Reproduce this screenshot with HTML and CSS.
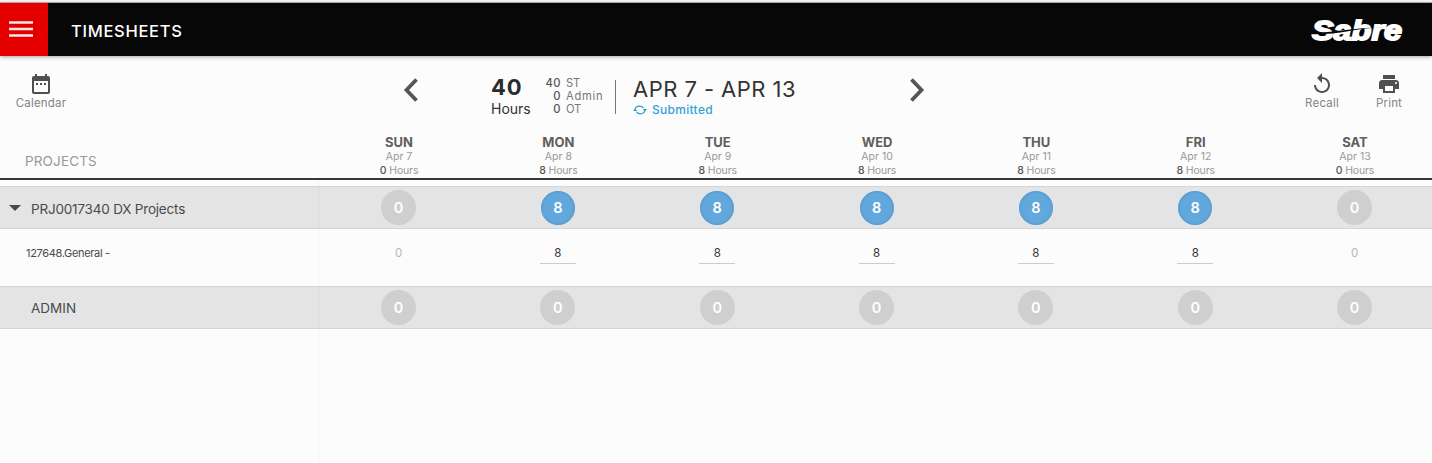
FILE: index.html
```html
<!DOCTYPE html>
<html lang="en">
<head>
<meta charset="utf-8">
<title>Timesheets</title>
<link rel="stylesheet" href="styles.css">
</head>
<body>
<header class="topbar">
  <button class="menu" aria-label="Menu"><svg width="24" height="16" viewBox="0 0 24 16"><path d="M0 1.5h24M0 8h24M0 14.5h24" stroke="#f4e8e8" stroke-width="2.700"/></svg></button>
  <h1 class="title">TIMESHEETS</h1>
  <svg class="logo" width="98" height="36" viewBox="0 0 98 36">
    <text class="logo-text" x="3" y="28" textLength="90" lengthAdjust="spacingAndGlyphs">Sabre</text>
    <path d="M1 22.300Q22 22.800 39 19.300T76 15.500Q57 15.300 39 17.800T1 21z" fill="#070707"/>
  </svg>
</header>
<section class="toolbar">
  <div class="tool calendar">
    <svg width="24" height="24" viewBox="0 0 24 24"><path fill="#505050" d="M9 11H7v2h2zm4 0h-2v2h2zm4 0h-2v2h2zm2-7h-1V2h-2v2H8V2H6v2H5c-1.100 0-2 .9-2 2v14c0 1.100.9 2 2 2h14c1.100 0 2-.9 2-2V6c0-1.100-.9-2-2-2zm0 16H5V9h14z"/></svg>
    <span class="label">Calendar</span>
  </div>
  <svg class="prev" width="16" height="24" viewBox="0 0 16 24"><path d="M13.500 1.500L3.500 12l10 10.500" fill="none" stroke="#555" stroke-width="3.800"/></svg>
  <div class="total"><b class="total-num">40</b><span class="total-label">Hours</span></div>
  <div class="split">
    <b>40</b><span class="st">ST</span>
    <b>0</b><span class="adm">Admin</span>
    <b>0</b><span class="ot">OT</span>
  </div>
  <div class="period">
    <span class="range">APR 7 - APR 13</span>
    <span class="status"><svg width="14" height="10" viewBox="0 0 14 10"><path d="M2 6V4.800Q2.500 1.300 6.500 1.200Q9 1.200 10.500 3M12 4v1.200Q11.500 8.800 7.500 8.800Q5 8.800 3.500 7" fill="none" stroke="#35a0d8" stroke-width="1.200"/><path d="M0 6h4.300L2.200 3.500zM9.700 4H14l-2.200 2.500z" fill="#35a0d8"/></svg><span class="submitted">Submitted</span></span>
  </div>
  <svg class="next" width="16" height="24" viewBox="0 0 16 24"><path d="M2.500 1.500L12.500 12l-10 10.500" fill="none" stroke="#555" stroke-width="3.800"/></svg>
  <div class="tool recall">
    <svg width="24" height="24" viewBox="0 0 24 24"><path fill="#505050" d="M12 5V1L7 6l5 5V7c3.310 0 6 2.690 6 6s-2.690 6-6 6-6-2.690-6-6H4c0 4.420 3.580 8 8 8s8-3.580 8-8-3.580-8-8-8z"/></svg>
    <span class="label">Recall</span>
  </div>
  <div class="tool print">
    <svg width="24" height="24" viewBox="0 0 24 24"><path fill="#505050" d="M19 8H5c-1.660 0-3 1.340-3 3v6h4v4h12v-4h4v-6c0-1.660-1.340-3-3-3zm-3 11H8v-5h8zm3-7c-.55 0-1-.45-1-1s.45-1 1-1 1 .45 1 1-.45 1-1 1zm-1-9H6v4h12z"/></svg>
    <span class="label">Print</span>
  </div>
</section>
<main class="sheet">
  <div class="row head">
    <div class="projects"><span>PROJECTS</span></div>
    <div class="day"><b>SUN</b><span>Apr 7</span><span><i>0</i> Hours</span></div>
    <div class="day"><b>MON</b><span>Apr 8</span><span><i>8</i> Hours</span></div>
    <div class="day"><b>TUE</b><span>Apr 9</span><span><i>8</i> Hours</span></div>
    <div class="day"><b>WED</b><span>Apr 10</span><span><i>8</i> Hours</span></div>
    <div class="day"><b>THU</b><span>Apr 11</span><span><i>8</i> Hours</span></div>
    <div class="day"><b>FRI</b><span>Apr 12</span><span><i>8</i> Hours</span></div>
    <div class="day"><b>SAT</b><span>Apr 13</span><span><i>0</i> Hours</span></div>
  </div>
  <div class="row gap"><div class="edge"></div></div>
  <div class="row group">
    <div class="edge name"><svg class="caret" width="12" height="6" viewBox="0 0 12 6"><path d="M0 0h12L6 6z" fill="#484848"/></svg><span class="prj">PRJ0017340 DX Projects</span></div>
    <div class="cell"><span class="dot">0</span></div>
    <div class="cell"><span class="dot on">8</span></div>
    <div class="cell"><span class="dot on">8</span></div>
    <div class="cell"><span class="dot on">8</span></div>
    <div class="cell"><span class="dot on">8</span></div>
    <div class="cell"><span class="dot on">8</span></div>
    <div class="cell"><span class="dot">0</span></div>
  </div>
  <div class="row task">
    <div class="edge task-name"><span>127648.General -</span></div>
    <div class="cell"><span class="val">0</span></div>
    <div class="cell"><span class="val input">8</span></div>
    <div class="cell"><span class="val input">8</span></div>
    <div class="cell"><span class="val input">8</span></div>
    <div class="cell"><span class="val input">8</span></div>
    <div class="cell"><span class="val input">8</span></div>
    <div class="cell"><span class="val">0</span></div>
  </div>
  <div class="row group admin-group">
    <div class="edge name"><span class="admin">ADMIN</span></div>
    <div class="cell"><span class="dot">0</span></div>
    <div class="cell"><span class="dot">0</span></div>
    <div class="cell"><span class="dot">0</span></div>
    <div class="cell"><span class="dot">0</span></div>
    <div class="cell"><span class="dot">0</span></div>
    <div class="cell"><span class="dot">0</span></div>
    <div class="cell"><span class="dot">0</span></div>
  </div>
  <div class="row rest"><div class="edge"></div></div>
</main>
</body>
</html>
```
FILE: styles.css
```css
* { box-sizing: border-box; }
body { margin: 0; height: 463px; overflow: hidden; display: flex; flex-direction: column; background: #fcfcfc; font-family: Inter, "Open Sans", sans-serif; color: #4a4a4a; white-space: nowrap; }
svg { display: block; flex: none; }
.topbar { flex: none; height: 54px; margin-top: 2px; border-top: 1px solid #aaa; display: flex; align-items: center; background: #070707; box-shadow: 0 1px 4px rgba(0,0,0,.35); }
.menu { width: 48px; height: 53px; border: 0; padding: 0 0 2px 9px; background: #e50000; }
.title { margin: 3px 0 0 23px; font-size: 16.500px; font-weight: 500; letter-spacing: .7px; color: #fff; }
.logo { margin: 0 25px 0 auto; overflow: visible; }
.logo-text { font: italic bold 28px "Liberation Sans", sans-serif; fill: #fff; stroke: #fff; stroke-width: 1.800px; }

.toolbar { flex: none; height: 74px; display: flex; align-items: flex-start; }
.tool { display: flex; flex-direction: column; align-items: center; padding-top: 16px; }
.tool .label { font-size: 11.500px; line-height: 14px; letter-spacing: .2px; color: #858585; }
.calendar { width: 82px; }
.prev { margin: 22px 0 0 321px; }
.total { width: 60px; margin: 19px 0 0 72px; display: flex; flex-direction: column; }
.total-num { font-size: 22px; line-height: 25px; letter-spacing: .9px; color: #2b2b2b; }
.total-label { font-size: 14px; line-height: 18px; color: #333; }
.split { width: 72px; height: 34px; margin: 24px 0 0 -7px; border-right: 1px solid #777; display: grid; grid-template-columns: 17px 1fr; column-gap: 5px; grid-auto-rows: 13px; line-height: 13px; font-size: 11.200px; color: #777; }
.split b { font-weight: 500; color: #555; text-align: right; letter-spacing: .5px; margin-top: -3px; }
.split span { margin-top: -3px; }
.adm { letter-spacing: .7px; }
.st, .ot { letter-spacing: -.1px; }
.period { width: 180px; margin: 20px 0 0 17px; display: flex; flex-direction: column; }
.range { font-size: 22px; line-height: 26px; letter-spacing: .45px; color: #333; }
.status { display: flex; align-items: center; gap: 5px; line-height: 16px; font-size: 12px; color: #35a0d8; }
.submitted { font-weight: 500; letter-spacing: .3px; }
.next { margin: 22px auto 0 96px; }
.recall { width: 60px; }
.print { width: 60px; margin: 0 13px 0 7px; }

.sheet { flex: 1; display: flex; flex-direction: column; }
.row { flex: none; display: grid; grid-template-columns: 318.900px repeat(7, 159.330px); overflow: hidden; }
.edge { border-right: 1px solid rgba(0,0,0,.035); }
.head { height: 50px; border-bottom: 2px solid #383838; }
.projects { padding: 23px 0 0 25px; font-size: 13.500px; line-height: 16px; letter-spacing: .15px; color: #999; }
.day { padding: 5px 0 0 1px; display: flex; flex-direction: column; align-items: center; font-size: 10.500px; line-height: 14px; color: #999; }
.day b { font-size: 13px; line-height: 15px; color: #5e5e5e; }
.day span:last-child { letter-spacing: -.15px; }
.day i { font-style: normal; font-weight: 500; color: #555; }
.gap { height: 6px; }
.group { height: 43px; border-top: 1px solid #d5d5d5; border-bottom: 1px solid #d5d5d5; background: #e4e4e4; }
.name { display: flex; align-items: center; font-size: 13.500px; padding-top: 3px; }
.caret { margin: -3px 10px 0 9px; }
.prj { letter-spacing: -.2px; }
.admin { padding-left: 31px; }
.admin-group .name { padding-top: 1px; }
.cell { display: flex; align-items: center; justify-content: center; }
.dot { width: 35px; height: 35px; border-radius: 50%; background: #cfcfcf; color: #fff; display: flex; align-items: center; justify-content: center; font-size: 14.500px; font-weight: 600; }
.dot.on { width: 34px; height: 34px; background: #62a8dc; box-shadow: inset 0 0 3px rgba(40,110,170,.5); }
.task { height: 57px; }
.task-name { padding: 16px 0 0 26px; font-size: 11px; line-height: 16px; letter-spacing: -.33px; }
.task .cell { align-items: flex-start; padding-top: 14px; }
.val { width: 36px; height: 21px; line-height: 20px; text-align: center; font-size: 11.500px; color: #b5b5b5; }
.input { color: #333; border-bottom: 1px solid #ccc; }
.rest { flex: 1; }
```
